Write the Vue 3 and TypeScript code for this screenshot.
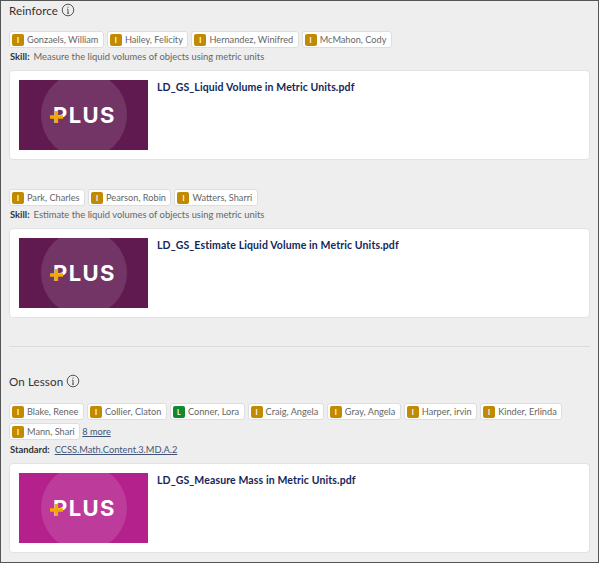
<script setup lang="ts">
interface Chip { name: string; level: string }
interface Group { chips: Chip[]; more?: string; label: string; text: string; link?: boolean; file: string; bright?: boolean }
const mk = (names: string[]): Chip[] => names.map((n) => ({ name: n, level: n === 'Conner, Lora' ? 'L' : 'I' }))
const first: Group[] = [
  { chips: mk(['Gonzaels, William', 'Hailey, Felicity', 'Hernandez, Winifred', 'McMahon, Cody']), label: 'Skill:', text: 'Measure the liquid volumes of objects using metric units', file: 'LD_GS_Liquid Volume in Metric Units.pdf' },
  { chips: mk(['Park, Charles', 'Pearson, Robin', 'Watters, Sharri']), label: 'Skill:', text: 'Estimate the liquid volumes of objects using metric units', file: 'LD_GS_Estimate Liquid Volume in Metric Units.pdf' },
]
const second: Group[] = [
  { chips: mk(['Blake, Renee', 'Collier, Claton', 'Conner, Lora', 'Craig, Angela', 'Gray, Angela', 'Harper, irvin', 'Kinder, Erlinda', 'Mann, Shari']), more: '8 more', label: 'Standard:', text: 'CCSS.Math.Content.3.MD.A.2', link: true, file: 'LD_GS_Measure Mass in Metric Units.pdf', bright: true },
]
const sections = [
  { title: 'Reinforce', groups: first },
  { title: 'On Lesson', groups: second },
]
</script>

<template>
  <div class="page">
    <section v-for="(s, si) in sections" :key="s.title" class="section" :class="{ later: si > 0 }">
      <h2 class="title">
        {{ s.title }}
        <svg class="info" width="14" height="14" viewBox="0 0 14 14" fill="none" stroke="#444" stroke-width="0.9">
          <circle cx="7" cy="7" r="5.8" />
          <path d="M7 6.2V10.2M6 10.2H8M6.1 6.2H7" />
          <circle cx="7" cy="4.1" r="0.6" fill="#444" stroke="none" />
        </svg>
      </h2>
      <div v-for="g in s.groups" :key="g.file" class="group" :class="{ wrapped: g.link }">
        <div class="chips">
          <span v-for="c in g.chips" :key="c.name" class="chip">
            <span class="badge" :class="{ green: c.level === 'L' }">{{ c.level }}</span>
            {{ c.name }}
          </span>
          <a v-if="g.more" class="more">{{ g.more }}</a>
        </div>
        <p class="meta">
          <b>{{ g.label }}</b>
          <a v-if="g.link" class="std">{{ g.text }}</a>
          <span v-else>{{ g.text }}</span>
        </p>
        <div class="card">
          <div class="thumb" :class="{ bright: g.bright }">
            <span class="disc"></span>
            <span class="logo">
              PLUS
              <svg class="plus" width="13" height="12" viewBox="0 0 13 12">
                <path d="M4.6 0H8V4.3H13V7.7H8V12H4.6V7.7H0V4.3H4.6Z" fill="#f2a900" />
              </svg>
            </span>
          </div>
          <a class="file">{{ g.file }}</a>
        </div>
      </div>
    </section>
  </div>
</template>

<style scoped>
.page {
  box-sizing: border-box;
  width: 599px;
  height: 563px;
  overflow: hidden;
  background: #eeeeee;
  border: 1px solid #555;
  padding: 0 8px;
  font-family: Lato, "Liberation Sans", sans-serif;
  color: #555;
}
.section.later {
  border-top: 1px solid #dcdcdc;
  margin-top: 28px;
  padding-top: 25px;
}
.title {
  display: flex;
  align-items: center;
  gap: 3px;
  margin: 0;
  height: 18px;
  font-size: 11.6px;
  font-weight: 400;
  letter-spacing: 0.1px;
  color: #333;
}
.group {
  margin-top: 12px;
}
.section.later .group {
  margin-top: 13px;
}
.section .group + .group {
  margin-top: 29px;
}
.chips {
  display: flex;
  flex-wrap: wrap;
  align-items: center;
  gap: 3px;
}
.chip {
  box-sizing: border-box;
  display: inline-flex;
  align-items: center;
  gap: 3px;
  height: 17px;
  padding: 0 4.5px 0 2px;
  background: #fff;
  border: 1px solid #dedede;
  border-radius: 3px;
  font-size: 9.2px;
  color: #666;
}
.badge {
  box-sizing: border-box;
  width: 12px;
  height: 12px;
  border-radius: 2px;
  background: #c28a00;
  color: #fff;
  font-size: 7px;
  font-weight: 700;
  line-height: 12px;
  text-align: center;
}
.badge.green {
  background: #0f8a2e;
}
.more {
  font-size: 9.2px;
  color: #44557a;
  text-decoration: underline;
  margin-left: -1px;
}
.meta {
  display: flex;
  gap: 4px;
  margin: 2px 0 0 1px;
  height: 13px;
  font-size: 9.4px;
  line-height: 13px;
  color: #666;
}
.wrapped .meta {
  margin-top: 3px;
}
.meta b {
  color: #333;
  font-weight: 700;
}
.std {
  margin-left: 1px;
  font-size: 9.3px;
  color: #44557a;
  text-decoration: underline;
}
.card {
  box-sizing: border-box;
  display: flex;
  gap: 9px;
  height: 90px;
  margin-top: 7px;
  padding: 9px 9px;
  background: #fff;
  border: 1px solid #e2e2e2;
  border-radius: 4px;
  width: 581px;
}
.thumb {
  position: relative;
  flex: none;
  width: 129px;
  height: 70px;
  overflow: hidden;
  background: #601a50;
}
.thumb.bright {
  background: #b4208c;
}
.disc {
  position: absolute;
  left: 22px;
  top: -8px;
  width: 86px;
  height: 86px;
  border-radius: 50%;
  background: rgba(255, 255, 255, 0.12);
}
.logo {
  position: absolute;
  left: 34px;
  top: 23px;
  font-family: Inter, Lato, sans-serif;
  font-size: 22px;
  line-height: 24px;
  font-weight: 700;
  letter-spacing: 1.4px;
  color: #fff;
}
.plus {
  position: absolute;
  left: -3px;
  top: 8px;
}
.file {
  margin-top: 1px;
  font-size: 10.5px;
  font-weight: 700;
  line-height: 13px;
  letter-spacing: 0.12px;
  color: #14275a;
}
</style>
<style>
html, body { background: #fff; }
</style>
